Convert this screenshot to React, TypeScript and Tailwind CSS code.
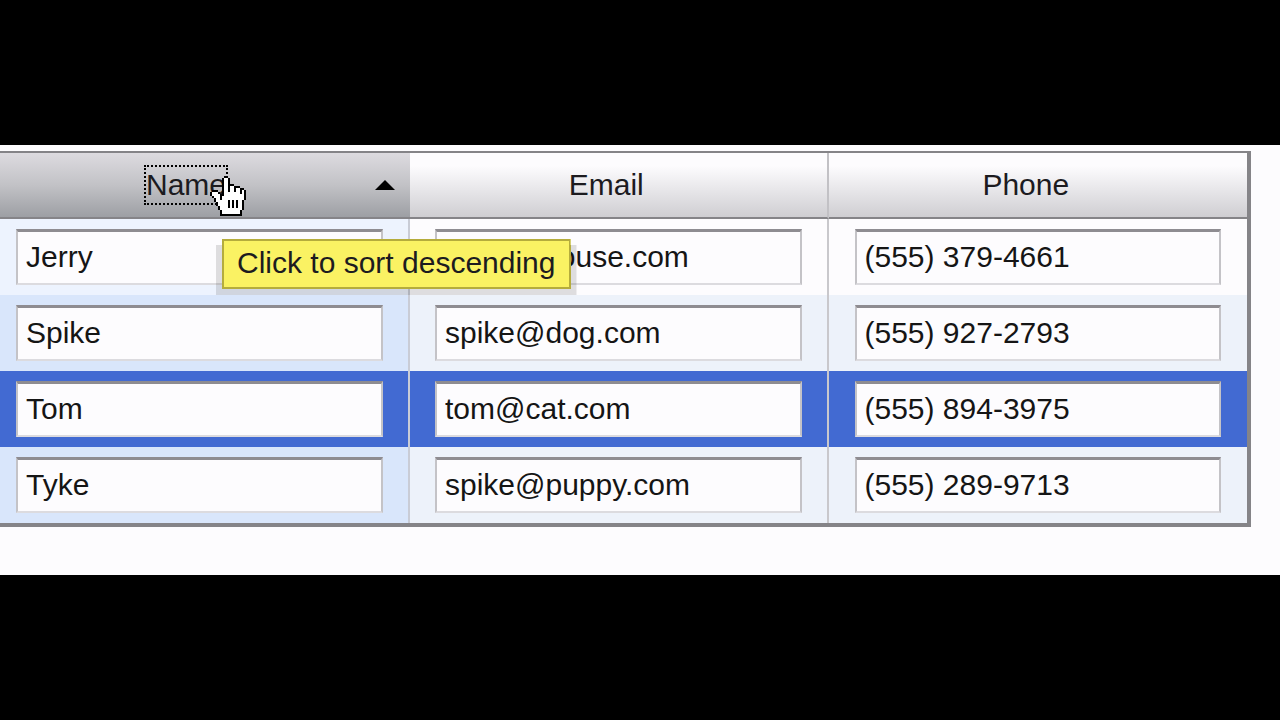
const people = [
  { name: "Jerry", email: "jerry@mouse.com", phone: "(555) 379-4661" },
  { name: "Spike", email: "spike@dog.com", phone: "(555) 927-2793" },
  { name: "Tom", email: "tom@cat.com", phone: "(555) 894-3975", selected: true },
  { name: "Tyke", email: "spike@puppy.com", phone: "(555) 289-9713" },
];

const rowColors = (index: number, selected?: boolean) => {
  if (selected) return { sorted: "bg-[#426ad2]", plain: "bg-[#426ad2]" };
  return index === 0
    ? { sorted: "bg-[#edf3fe]", plain: "bg-[#fdfcfe]" }
    : { sorted: "bg-[#d9e6fb]", plain: "bg-[#edf2fa]" };
};

// "#" is outline, "o" is fill.
const handRows = [
  ".......##.........",
  "......#oo#........",
  "......#oo#........",
  "......#oo#........",
  "......#oo###......",
  "......#oo#oo###...",
  "......#oo#oo#oo##.",
  ".###..#oo#oo#oo#o#",
  "#ooo#.#oooooooo#o#",
  "#oooo##oooooooooo#",
  ".#ooo#ooooooooooo#",
  "..#oo#ooooooooooo#",
  "..#oooooo#o#o#oo#.",
  "...#ooooo#o#o#oo#.",
  "...#ooooo#o#o#oo#.",
  "....#oooo#o#o#oo#.",
  "....#ooooooooooo#.",
  ".....#ooooooooo#..",
  ".....#ooooooooo#..",
  ".....###########..",
];

const cells = (mark: string) =>
  handRows
    .flatMap((row, y) => [...row].map((c, x) => (c === mark ? `M${x} ${y}h1v1h-1z` : "")))
    .join("");

function Hand() {
  return (
    <svg
      viewBox="0 0 18 20"
      shapeRendering="crispEdges"
      aria-hidden="true"
      className="absolute top-[25px] left-[210px] h-10 w-9"
    >
      <path d={cells("o")} fill="#fff" />
      <path d={cells("#")} fill="#000" />
    </svg>
  );
}

function Field({ label, value }: { label: string; value: string }) {
  return (
    <input
      type="text"
      aria-label={label}
      defaultValue={value}
      className="block h-14 w-full border-2 border-t-3 border-x-[#c4c3c7] border-t-[#8e8c91] border-b-[#dcdbdf] bg-[#fdfcfe] pb-px pl-2 text-[30px] leading-9 text-[#151515] outline-none"
    />
  );
}

export default function App() {
  return (
    <div className="flex min-h-screen items-center bg-black font-['Liberation_Sans',Arial,sans-serif] text-[30px] leading-9 text-[#1c1b1f]">
      <main className="w-full bg-[#fdfcfe] pt-[6px] pr-[29px] pb-12">
        <div className="relative">
          <table className="w-full table-fixed border-separate border-spacing-0 border-t-2 border-r-4 border-b-4 border-[#858488]">
            <colgroup>
              <col className="w-[410px]" />
              <col />
              <col />
            </colgroup>
            <thead>
              <tr className="h-[66px]">
                <th
                  scope="col"
                  aria-sort="ascending"
                  className="border-b-2 border-b-[#858488] bg-linear-to-b from-[#dddbe0] via-[#c2c2c6] to-[#9d9fa4] p-0 font-normal"
                >
                  <div className="flex items-center pr-[15px] pl-36">
                    <button
                      type="button"
                      className="border-2 border-dotted border-black"
                    >
                      Name
                    </button>
                    <svg viewBox="0 0 20 10" aria-hidden="true" className="ml-auto h-[10px] w-5">
                      <path d="M10 0L20 10H0z" />
                    </svg>
                  </div>
                </th>
                <th
                  scope="col"
                  className="border-r-2 border-b-2 border-r-[#c2c1c5] border-b-[#858488] bg-linear-to-b from-[#fdfcfe] from-20% via-[#e9e8eb] via-55% to-[#cfced2] p-0 pr-6 font-normal"
                >
                  <button type="button">Email</button>
                </th>
                <th
                  scope="col"
                  className="border-b-2 border-b-[#858488] bg-linear-to-b from-[#fdfcfe] from-20% via-[#e9e8eb] via-55% to-[#cfced2] p-0 pr-6 font-normal"
                >
                  <button type="button">Phone</button>
                </th>
              </tr>
            </thead>
            <tbody>
              {people.map((p, i) => {
                const c = rowColors(i, p.selected);
                return (
                  <tr key={p.name} className="h-19">
                    <td className={`${c.sorted} border-r-2 border-[#c9ccd6] py-[10px] pr-[25px] pl-4`}>
                      <Field label={`Name of ${p.name}`} value={p.name} />
                    </td>
                    <td className={`${c.plain} border-r-2 border-[#c9c8cc] py-[10px] px-[25px]`}>
                      <Field label={`Email of ${p.name}`} value={p.email} />
                    </td>
                    <td className={`${c.plain} py-[10px] px-[26px]`}>
                      <Field label={`Phone of ${p.name}`} value={p.phone} />
                    </td>
                  </tr>
                );
              })}
            </tbody>
          </table>
          <div className="absolute top-[88px] left-[216px] bg-black/12 px-[6px] pb-[6px] [clip-path:polygon(0_6px,6px_6px,6px_0,calc(100%_-_6px)_0,calc(100%_-_6px)_6px,100%_6px,100%_100%,0_100%)]">
            <div
              role="tooltip"
              className="border-2 border-[#b5ac3c] bg-[#faf263] px-[13px] pt-1 pb-[6px] whitespace-nowrap"
            >
              Click to sort descending
            </div>
          </div>
          <Hand />
        </div>
      </main>
    </div>
  );
}
